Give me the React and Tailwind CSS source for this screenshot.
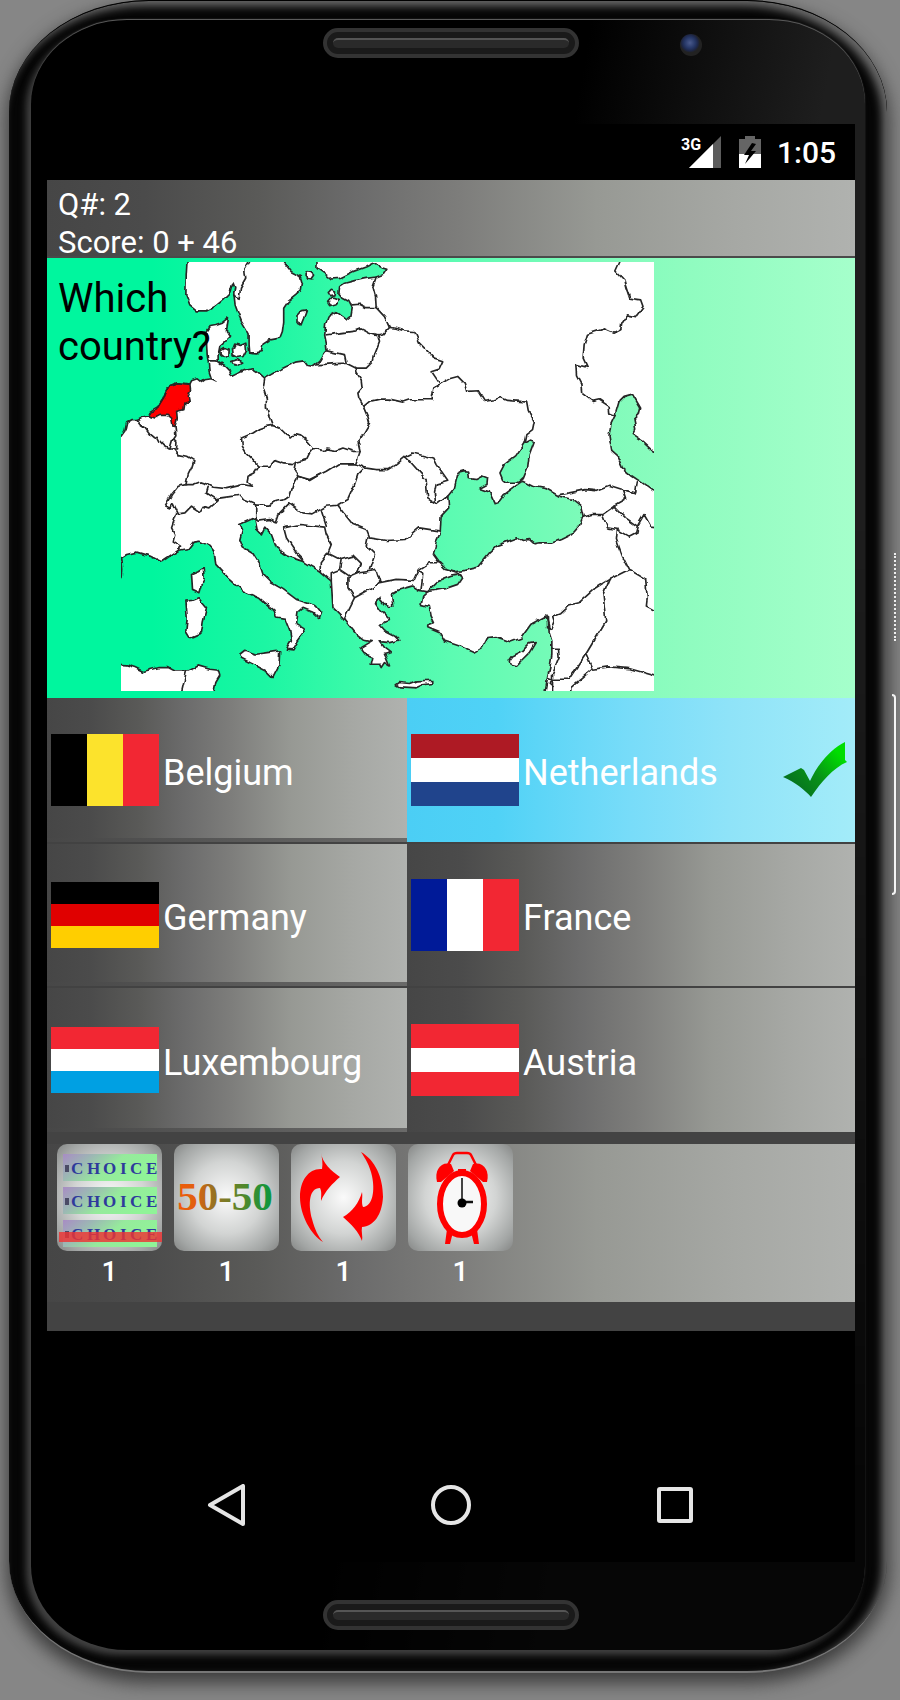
import React from "react";

const GRAY =
  "bg-[linear-gradient(to_right,#464646_0%,#4b4b4b_12%,#5a5a58_26%,#6b6b6b_38%,#7d7d7b_51%,#979994_68%,#a6a8a4_85%,#b0b2af_100%)]";

const SEAS = [
  // North Sea and Baltic
  "M20 10 L232 10 229 60 228 120 240 150 262 168 290 168 315 155 340 135 360 115 366 95 370 84 375 98 372 115 376 150 385 175 395 200 408 222 418 240 418 270 420 293 440 294 455 290 460 268 478 256 510 250 518 230 522 200 522 160 535 140 560 120 575 105 578 85 572 65 545 50 525 25 525 10 622 10 622 40 635 50 650 60 665 72 690 70 730 50 770 35 790 25 815 38 832 43 822 58 800 66 770 70 735 77 705 85 690 95 688 115 700 130 718 140 728 160 724 185 712 195 695 182 680 170 665 178 655 190 648 210 645 240 650 265 652 285 640 300 628 320 610 335 595 332 585 318 560 322 530 335 500 350 465 370 445 352 430 342 410 345 385 355 365 365 358 345 345 332 325 320 325 300 330 275 345 262 362 245 350 228 356 188 335 205 315 212 298 215 288 230 290 260 292 300 295 320 298 350 305 372 285 375 275 383 262 372 245 378 240 388 200 384 178 392 168 410 160 430 145 455 120 470 118 482 95 488 80 495 65 495 50 505 45 528 33 545 20 550 Z",
  // Caspian
  "M1518 482 L1530 440 1545 425 1570 418 1580 435 1595 460 1590 480 1575 495 1580 520 1570 540 1600 560 1632 590 1660 605 1660 720 1632 708 1600 685 1570 665 1540 640 1525 605 1508 590 1500 545 1505 510 Z",
  // Azov
  "M1275 560 L1262 556 1245 565 1220 603 1185 630 1172 655 1180 675 1190 683 1230 683 1242 672 1255 640 1260 600 Z",
  // Black Sea
  "M1045 660 L1050 652 1065 648 1078 650 1080 672 1100 675 1120 664 1135 670 1133 690 1110 702 1140 712 1155 745 1170 740 1185 720 1225 690 1240 680 1270 695 1310 702 1350 725 1390 735 1415 755 1422 785 1410 815 1390 838 1355 855 1330 865 1290 865 1275 868 1260 855 1240 858 1225 850 1165 872 1140 895 1105 938 1065 948 1035 952 1010 945 990 925 972 900 980 865 992 840 995 785 1018 760 1015 725 1035 700 Z",
  // Marmara
  "M1055 960 L1060 968 1045 990 1010 1002 955 1012 990 978 1025 965 Z",
  // Mediterranean
  "M955 1012 L940 1025 935 1050 960 1057 965 1085 975 1105 955 1112 955 1120 990 1135 1005 1160 1050 1175 1095 1195 1120 1180 1135 1150 1160 1147 1205 1163 1235 1152 1265 1110 1310 1085 1318 1110 1320 1135 1328 1160 1328 1200 1322 1240 1315 1270 1308 1310 1308 1340 313 1340 313 1310 318 1285 330 1265 325 1248 300 1245 265 1235 235 1250 195 1250 175 1240 145 1240 100 1252 75 1240 50 1232 20 1230 20 970 36 970 38 945 35 910 50 900 80 893 120 905 155 922 180 905 205 888 235 882 250 863 270 860 300 875 312 890 318 930 350 965 400 1010 450 1032 490 1065 500 1088 525 1092 540 1130 545 1160 530 1185 550 1187 565 1160 583 1135 580 1120 560 1108 565 1075 580 1062 610 1074 630 1092 636 1075 620 1055 560 1035 520 1005 485 985 460 960 450 930 430 898 400 880 390 855 398 825 390 810 435 790 442 825 455 838 465 818 485 840 500 880 535 905 580 920 630 950 665 980 670 1060 700 1090 720 1115 740 1140 760 1157 785 1162 755 1180 770 1200 790 1208 785 1230 810 1230 815 1240 825 1225 840 1235 830 1210 825 1200 845 1195 825 1180 812 1162 840 1165 868 1158 855 1145 825 1130 812 1115 825 1100 840 1095 815 1070 798 1045 810 1032 825 1050 838 1057 850 1055 846 1020 870 1006 910 995 930 1008 Z",
];

const ISLANDS = [
  "M330 288 L342 281 358 286 357 303 342 308 332 300 Z",
  "M368 285 L375 268 392 272 408 265 410 285 400 305 385 308 370 300 Z",
  "M362 320 L382 314 396 322 380 331 366 328 Z",
  "M562 185 L575 170 590 168 582 190 574 210 562 203 Z",
  "M586 60 L592 50 604 52 612 60 604 72 592 70 Z",
  "M656 113 L665 103 678 108 676 120 662 122 Z",
  "M654 142 L668 126 690 134 680 146 660 152 Z",
  "M245 960 L265 952 280 942 283 970 270 1015 248 1005 Z",
  "M228 1040 L245 1038 265 1030 290 1060 280 1100 275 1135 240 1150 228 1130 232 1090 Z",
  "M390 1200 L405 1188 440 1200 510 1190 508 1235 490 1270 470 1250 430 1230 395 1212 Z",
  "M860 1292 L870 1285 900 1288 920 1280 970 1278 970 1288 940 1292 920 1301 870 1298 Z",
  "M1200 1220 L1210 1205 1240 1190 1260 1168 1278 1165 1260 1195 1240 1215 1220 1235 1203 1230 Z",
];

const NETHERLANDS =
  "M178 392 L200 384 240 388 242 405 235 425 238 440 225 445 222 465 200 470 202 490 195 515 190 515 185 490 175 482 150 482 135 490 120 485 115 475 140 465 150 445 160 430 168 410 Z";

const BORDERS = [
  "M388 130 L392 100 408 72 405 45 420 20 M372 122 L388 130",
  "M295 318 L320 318 335 330 M305 372 L318 378",
  "M80 495 L90 510 105 520 120 540 132 550 142 545 150 560 165 575 178 583 190 583",
  "M195 515 L198 540 188 555 180 583 M190 552 L201 562 200 583 190 583 205 600 230 605 252 618 245 640 235 660 228 690",
  "M465 370 L460 400 470 430 470 460 480 490 488 512",
  "M488 512 L470 515 450 522 430 535 395 550 398 575 410 595 430 615 448 635 480 635 495 618 525 628 550 630 560 622 590 615 600 595 612 580 595 560 575 545 555 540 545 550 530 540 510 520 Z",
  "M612 580 L640 588 650 583 680 588 700 580 730 590 752 590",
  "M752 590 L745 560 765 530 780 505 775 485 762 455 748 430 745 415 758 400 755 375 742 355 740 340",
  "M652 288 L705 300 710 325 615 330 M710 325 L740 340 770 340 790 320 795 300 810 262 805 243 780 235 755 222 740 228 690 235 650 240",
  "M728 150 L750 148 770 158 800 158 798 125 790 95 800 66 M800 158 L825 185 840 218 820 240 805 243",
  "M762 455 L780 440 810 433 840 433 880 442 900 435 968 435",
  "M560 625 L555 650 565 665 600 675 650 650 685 628 738 628 M752 590 L745 610 738 628 765 640 800 645 835 645 860 630 890 605 910 595 970 610 980 630 1015 680 980 690 975 715 978 740 M890 608 L950 675 955 730 985 748 1015 725",
  "M765 640 L745 660 735 690 715 735 685 752 650 755 610 778 580 775 540 745",
  "M448 635 L435 655 415 665 412 680 428 695 400 690 350 702 310 698 295 690 270 682 250 690 228 690 205 695 185 720 165 755 180 760 190 745 205 778 225 775 245 755 270 772 280 755 300 760 325 738 290 715 295 698",
  "M565 665 L550 690 540 725 525 735 500 740 480 752 440 752 400 735 390 722 320 732 M565 665 L600 678 630 660",
  "M200 778 L185 820 195 840 190 860 215 875 205 888",
  "M438 752 L438 792 445 800 480 795 500 805 510 775 540 745",
  "M585 920 L560 895 530 850 522 820 570 810 645 818 650 840 665 870 655 895 632 925 632 950",
  "M635 768 L650 815 M685 752 L710 785 730 810 770 825 780 850 830 858 890 855 930 820 992 830",
  "M775 850 L770 875 795 900 780 945",
  "M655 895 L695 915 690 945 665 955 665 980 M695 915 L730 905 755 930 745 955 720 965 690 945",
  "M715 970 L750 955 800 948 810 980 790 1000 735 1030 715 1000 Z M735 1030 L705 1090",
  "M810 985 L860 975 915 978 930 945 960 925 990 925 M930 945 L940 960 935 1005",
  "M230 1250 L215 1315",
  "M840 218 L860 220 885 228 915 230 930 265 960 295 975 310 1000 318 990 340 965 348 980 370 992 388 970 400 965 435",
  "M992 388 L1020 372 1045 365 1065 385 1072 410 1105 408 1125 440 1155 435 1175 428 1195 437 1255 442 1260 470 1275 500 1270 525 1250 540 1245 565",
  "M1535 15 L1520 48 1545 75 1550 95 1562 130 1595 135 1602 155 1580 185 1555 180 1538 205 1535 225 1515 235 1485 222 1435 238 1425 270 1422 310 1435 338 1400 328 1402 360 1415 385 1418 415 1450 440 1470 435 1500 455 1502 475 1518 482",
  "M1350 720 L1380 715 1430 705 1460 708 1500 692 1540 705 1580 715 1585 682 M1540 705 L1550 735 1515 755 1480 780 1450 780 1422 788",
  "M1480 780 L1495 820 1525 825 1560 845 1580 835 1585 815 1550 790 1515 755 M1585 815 L1605 780 1625 815 1650 818",
  "M1525 825 L1522 855 1540 905 1560 945 1610 975 1615 1030 1612 1055 1650 1075",
  "M1560 945 L1500 975 1460 1000 1410 1045 1380 1052 1355 1075 1330 1085 1335 1100 1325 1125 1315 1120 1315 1090",
  "M1500 975 L1482 1020 1490 1100 1430 1200 1380 1275 1330 1275 M1430 1200 L1450 1245 1385 1300 1385 1320 M1450 1245 L1500 1238 1560 1243 1650 1268",
  "M1328 1185 L1348 1185 1350 1210 1330 1260 1330 1320 M1318 1270 L1330 1275 1320 1290 1332 1300",
  "M1025 950 L1040 955 1055 960",
];

function EuropeMap() {
  return (
    <svg viewBox="33 21 1602 1290" className="block w-full" role="img" aria-label="Map of Europe">
      <defs>
        <mask id="land" maskUnits="userSpaceOnUse" x="0" y="0" width="1680" height="1360">
          <rect width="1680" height="1360" fill="#fff" />
          {SEAS.map((d, i) => (
            <path key={i} d={d} fill="#000" />
          ))}
          {ISLANDS.map((d, i) => (
            <path key={i} d={d} fill="#fff" />
          ))}
        </mask>
        <filter id="coast" filterUnits="userSpaceOnUse" x="0" y="0" width="1680" height="1360">
          <feTurbulence type="fractalNoise" baseFrequency="0.045" numOctaves="1" seed="4" result="n" />
          <feDisplacementMap in="SourceGraphic" in2="n" scale="16" xChannelSelector="R" yChannelSelector="G" />
        </filter>
      </defs>
      <g filter="url(#coast)">
        <rect width="1680" height="1360" fill="#fff" mask="url(#land)" />
        <path d={NETHERLANDS} fill="#f00" />
        <g fill="none" stroke="#262626" strokeWidth="5" strokeLinejoin="round" strokeLinecap="round">
          {[...SEAS, ...ISLANDS, ...BORDERS, NETHERLANDS].map((d, i) => (
            <path key={i} d={d} />
          ))}
        </g>
      </g>
    </svg>
  );
}

function Flag({ colors, vertical, tall }) {
  return (
    <span
      aria-hidden="true"
      className={
        "flex w-[108px] shrink-0 overflow-hidden " +
        (vertical ? "flex-row " : "flex-col ") +
        (tall ? "h-[72px]" : "h-[66px]")
      }
    >
      {colors.map((c, i) => (
        <span key={i} className="flex-1" style={{ backgroundColor: c }} />
      ))}
    </span>
  );
}

function CheckMark() {
  return (
    <svg viewBox="0 0 64 56" className="mr-2 ml-auto h-14 w-16 shrink-0" role="img" aria-label="Correct">
      <defs>
        <linearGradient id="tick" x1="0.1" y1="0.8" x2="1" y2="0.1">
          <stop offset="0" stopColor="#067020" />
          <stop offset="0.4" stopColor="#089018" />
          <stop offset="0.85" stopColor="#00dd00" />
        </linearGradient>
      </defs>
      <path
        d="M0 35 L18 26 L21 28 L27 39 C34 24 46 8 62 0 L62 18 L64 20 C50 26 38 40 28 55 C22 48 12 40 0 35 Z"
        fill="url(#tick)"
      />
    </svg>
  );
}

const OPTIONS = [
  { name: "Belgium", colors: ["#000", "#fce32c", "#f22733"], vertical: true, tall: true },
  { name: "Netherlands", colors: ["#ae1a24", "#fff", "#20448c"], tall: true, correct: true },
  { name: "Germany", colors: ["#000", "#e00000", "#ffce00"] },
  { name: "France", colors: ["#001a98", "#fff", "#f22733"], vertical: true, tall: true },
  { name: "Luxembourg", colors: ["#f22733", "#fff", "#00a0e3"] },
  { name: "Austria", colors: ["#f22733", "#fff", "#f22733"], tall: true },
];

function Option({ option, left, last }) {
  const bg = option.correct
    ? "bg-[linear-gradient(to_right,#4bcef5_0%,#50d2f6_20%,#78dcf9_50%,#8fe3f8_72%,#a3ecf9_100%)]"
    : GRAY;
  return (
    <button type="button" className="flex flex-col text-left">
      <span className={"relative flex w-full flex-1 items-center gap-1 pl-1 text-[36px] leading-[42px] " + bg}>
        <Flag {...option} />
        <span className="pt-1.5">{option.name}</span>
        {option.correct && <CheckMark />}
        {left && <span className="absolute inset-x-0 bottom-0 h-1 bg-linear-to-r from-[#474747] to-[#6a6a69]" />}
      </span>
      {!last && <span className="h-0.5 w-full bg-[#424242]" />}
    </button>
  );
}

function Tile({ id, children, label }) {
  return (
    <button type="button" aria-label={label} className="flex w-[105px] flex-col items-center">
      <svg viewBox="0 0 105 107" className="block w-full">
        <defs>
          <radialGradient id={id} cx="0.5" cy="0.5" r="0.68">
            <stop offset="0" stopColor="#fafafa" />
            <stop offset="0.5" stopColor="#d2d4d3" />
            <stop offset="0.85" stopColor="#a3a6a5" />
            <stop offset="1" stopColor="#8a8c8b" />
          </radialGradient>
        </defs>
        <rect width="105" height="107" rx="10" fill={`url(#${id})`} />
        {children}
      </svg>
      <span className="text-[28px] leading-[42px] font-medium">1</span>
    </button>
  );
}

function ChoiceRow({ y }) {
  return (
    <g>
      <rect x="6" y={y} width="94" height="27" fill="url(#choice)" />
      <rect x="8" y={y + 11} width="4" height="7" fill="#4b4b66" />
      <text
        x="14 30 46 63 73 89"
        y={y + 20}
        fontFamily="'Liberation Serif', serif"
        fontWeight="700"
        fontSize="17"
        fill="#2f3a9c"
      >
        CHOICE
      </text>
    </g>
  );
}

function Tools() {
  return (
    <div className={"flex gap-3 px-2.5 pb-[9px] " + GRAY}>
      <Tile id="t1" label="Remove one choice">
        <defs>
          <linearGradient id="choice" x1="0" y1="0" x2="1" y2="0.35">
            <stop offset="0" stopColor="#a88cc4" />
            <stop offset="0.3" stopColor="#9cb8b4" />
            <stop offset="0.6" stopColor="#96ea9c" />
            <stop offset="1" stopColor="#90f398" />
          </linearGradient>
        </defs>
        <ChoiceRow y={10} />
        <ChoiceRow y={43} />
        <ChoiceRow y={76} />
        <rect x="2" y="88" width="103" height="10" fill="#e33" fillOpacity="0.82" />
      </Tile>
      <Tile id="t2" label="50-50">
        <defs>
          <linearGradient id="fifty" x1="0" y1="0" x2="1" y2="0">
            <stop offset="0" stopColor="#f05a08" />
            <stop offset="0.2" stopColor="#e06010" />
            <stop offset="0.35" stopColor="#a07020" />
            <stop offset="0.7" stopColor="#50882c" />
            <stop offset="1" stopColor="#08983c" />
          </linearGradient>
        </defs>
        <text
          x="51"
          y="66"
          textAnchor="middle"
          fontFamily="'Liberation Serif', serif"
          fontWeight="700"
          fontSize="41"
          fill="url(#fifty)"
        >
          50-50
        </text>
      </Tile>
      <Tile id="t3" label="Swap question">
        <g fill="#f00">
          <path d="M30 9 C31 18 40 27 49 33 C42 39 34 47 30 57 C30 52 31 48 29 44 C18 44 17 60 21 75 C24 86 27 92 32 98 C20 91 9 71 9 53 C9 36 18 24 31 25 C32 19 31 14 30 9 Z" />
          <path d="M70 8 C84 16 92 33 92 53 C91 71 83 82 71 83 C70 88 72 92 71 97 C68 88 60 80 52 73 C61 68 68 59 71 48 C72 53 70 58 72 63 C82 62 84 46 81 32 C79 22 74 14 70 8 Z" />
        </g>
      </Tile>
      <Tile id="t4" label="More time">
        <path d="M40 21 L45 11 Q46 9 49 9 H59 Q62 9 63 11 L68 21" fill="none" stroke="#f00" strokeWidth="2.5" />
        <g fill="#f00">
          <path d="M29 38 C26 26 33 17 43 20 L46 27 L33 38 Z" />
          <path d="M79 38 C82 26 75 17 65 20 L62 27 L75 38 Z" />
          <path d="M39 85 L37 100 H42 L45 88 Z M69 85 L71 100 H66 L63 88 Z" />
          <rect x="50" y="25" width="8" height="5" />
        </g>
        <ellipse cx="54" cy="60" rx="22" ry="31" fill="#f8f8f8" stroke="#f00" strokeWidth="6" />
        <path d="M54 34 V59" stroke="#444" strokeWidth="2" />
        <path d="M54 58 H65" stroke="#111" strokeWidth="2.5" />
        <circle cx="54" cy="59" r="4.5" fill="#000" />
      </Tile>
    </div>
  );
}

function StatusBar() {
  return (
    <div className="flex h-14 items-center justify-end bg-black pr-[19px]">
      <svg viewBox="0 0 40 32" className="mr-[18px] h-8 w-10" role="img" aria-label="3G signal">
        <path d="M8 32 L40 0 V32 Z" fill="#5c5c5c" />
        <path d="M8 32 L32 8 V32 Z" fill="#fff" />
        <text x="0" y="14" fontFamily="Roboto, sans-serif" fontWeight="700" fontSize="16" fill="#fff">
          3G
        </text>
      </svg>
      <svg viewBox="0 0 22 32" className="mr-4 h-8 w-[22px]" role="img" aria-label="Battery charging">
        <path d="M6 0 H16 V3 H22 V18 H0 V3 H6 Z" fill="#656565" />
        <path d="M0 18 H22 V32 H0 Z" fill="#fff" />
        <path d="M13 7 L5 19 H10 L6 28 L17 15 H12 L17 8 Z" fill="#000" />
      </svg>
      <span className="pt-0.5 text-[30px] leading-9 font-medium">1:05</span>
    </div>
  );
}

function Speaker() {
  return (
    <div className="h-[30px] w-[256px] rounded-full border-[4px] border-[#333] bg-[#1a1a1a] p-[6px]">
      <div className="h-full rounded-full border-t-2 border-[#555] bg-[#2a2a2a]" />
    </div>
  );
}

export default function App() {
  return (
    <div className="relative min-h-screen overflow-hidden bg-[#868686] pr-[13px] pb-7 pl-[9px] font-[Roboto,sans-serif] text-white">
      <div className="rounded-[140px/112px] border-t border-b-2 border-t-black border-b-[#777] bg-[#060606] px-[22px] pt-[19px] pb-[21px] shadow-[inset_-5px_5px_9px_#6a6a6a,0_8px_18px_2px_#3c3c3c]">
        <div className="rounded-[96px/84px] bg-[linear-gradient(to_bottom,transparent_30%,#000c_90%),linear-gradient(100deg,#000_50%,#1e1e1e_72%)] bg-black shadow-[-5px_5px_7px_#424242,0_-1px_1px_#666]">
          <div className="grid h-[104px] grid-cols-[1fr_256px_1fr] items-start pt-2 pl-1.5">
            <div className="col-start-2">
              <Speaker />
            </div>
            <div className="mt-1.5 ml-[101px] size-[22px] rounded-full bg-[radial-gradient(circle_at_45%_40%,#4a5a8c_0%,#263766_30%,#1d2646_45%,#222_55%)]" />
          </div>
          <main className="mr-2.5 ml-4 bg-black">
            <StatusBar />
            <header className={"relative z-10 h-[78px] border-b-2 border-[#4a4a4a] pt-1.5 pl-[11px] text-[31px] leading-[38px] " + GRAY}>
              <p>Q#: 2</p>
              <p>Score: 0 + 46</p>
            </header>
            <section className="relative bg-[linear-gradient(to_right,#00f69e_0%,#00f69e_13%,#1cf6a3_27%,#38f9a9_37%,#5cfbb2_50%,#7cfbb9_66%,#90fcc0_80%,#a5ffcb_100%)] pt-1 pr-[201px] pb-[7px] pl-[74px]">
              <EuropeMap />
              <h1 className="absolute top-[17px] left-[11px] w-40 text-[40px] leading-[48px] text-black">
                Which country?
              </h1>
            </section>
            <section className="grid grid-cols-[45fr_56fr] grid-rows-[146px_144px_144px]">
              {OPTIONS.map((o, i) => (
                <Option key={o.name} option={o} left={i % 2 === 0} last={i > 3} />
              ))}
            </section>
            <div className="h-3 bg-[#434343]" />
            <Tools />
            <div className="h-[29px] bg-[#434343]" />
            <nav className="flex h-[231px] items-end justify-center gap-[185px] pb-9">
              <button type="button" aria-label="Back">
                <svg viewBox="0 0 40 42" className="block h-[42px] w-10">
                  <path d="M37 2 V40 L4 21 Z" fill="none" stroke="#e6e6e6" strokeWidth="4" strokeLinejoin="round" />
                </svg>
              </button>
              <button type="button" aria-label="Home">
                <svg viewBox="0 0 40 42" className="block h-[42px] w-10">
                  <circle cx="20" cy="21" r="18" fill="none" stroke="#e6e6e6" strokeWidth="4" />
                </svg>
              </button>
              <button type="button" aria-label="Overview">
                <svg viewBox="0 0 40 42" className="block h-[42px] w-10">
                  <rect x="3" y="5" width="32" height="32" rx="1" fill="none" stroke="#e6e6e6" strokeWidth="4" />
                </svg>
              </button>
            </nav>
          </main>
          <div className="flex justify-center pt-[38px] pb-5 pl-1.5">
            <Speaker />
          </div>
        </div>
      </div>
      <div className="absolute top-[553px] right-[4px] h-[88px] border-r-2 border-dotted border-[#eee]" />
      <div className="absolute top-[694px] right-[4px] h-[201px] w-1 rounded-r-sm border-y-2 border-r-2 border-[#f4f4f4]" />
    </div>
  );
}
